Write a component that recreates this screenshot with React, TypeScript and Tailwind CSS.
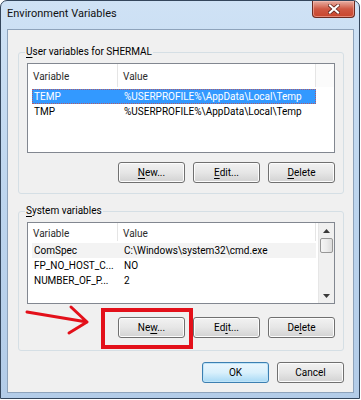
import React from 'react';

type Row = { name: string; value: string; selected?: boolean; hot?: boolean };

function M({ children }: { children: React.ReactNode }) {
  return <span className="underline underline-offset-[2px]">{children}</span>;
}

function Btn({ children, def = false }: { children: React.ReactNode; def?: boolean }) {
  return (
    <div
      className={
        'w-[67px] h-[21px] rounded-[3px] border flex items-center justify-center text-[10px] text-black ' +
        (def
          ? 'border-[#3c7fb1] bg-gradient-to-b from-[#eaf6fd] via-[#d9f0fc] to-[#a7d9f5] shadow-[inset_0_0_0_1px_#bfe4f8]'
          : 'border-[#707070] bg-gradient-to-b from-[#f2f2f2] via-[#e6e6e6] to-[#d2d2d2] shadow-[inset_0_0_0_1px_#fcfcfc]')
      }
    >
      <span className="leading-none">{children}</span>
    </div>
  );
}

function Header({ h, filler }: { h: string; filler: boolean }) {
  return (
    <div className={'flex shrink-0 bg-white text-[#2b2b2b] ' + h}>
      <div className="w-[90px] shrink-0 border-r border-[#e5e5e5] flex items-center pl-[5px] pt-[3px]">Variable</div>
      <div className="w-[198px] shrink-0 border-r border-[#e5e5e5] flex items-center pl-[5px] pt-[3px]">Value</div>
      {filler && <div className="flex-1 bg-[#fbfbfb]" />}
    </div>
  );
}

function RowView({ r }: { r: Row }) {
  return (
    <div
      className={
        'flex h-[15px] ml-[4px] w-[284px] items-center ' +
        (r.selected
          ? 'bg-[#3399ff] text-white outline outline-1 outline-dotted outline-[#b05a6a] -outline-offset-1'
          : r.hot
          ? 'bg-[#f3f3f3]'
          : '')
      }
    >
      <div className="w-[86px] shrink-0 pl-[2px] whitespace-nowrap">{r.name}</div>
      <div className="flex-1 pl-[6px] whitespace-nowrap">{r.value}</div>
    </div>
  );
}

function Scrollbar() {
  return (
    <div className="w-[16px] shrink-0 bg-[#f0f0f0] border-l border-[#e6e6e6] flex flex-col">
      <div className="h-[15px] flex items-center justify-center">
        <svg width="7" height="4" viewBox="0 0 7 4">
          <path d="M0 4 L3.5 0 L7 4 Z" fill="#3a3a3a" />
        </svg>
      </div>
      <div className="h-[15px] mx-[1px] rounded-[2px] border border-[#979797] bg-gradient-to-r from-[#f5f5f5] via-[#ececec] to-[#dcdcdc]" />
      <div className="flex-1" />
      <div className="h-[15px] flex items-center justify-center">
        <svg width="7" height="4" viewBox="0 0 7 4">
          <path d="M0 0 L3.5 4 L7 0 Z" fill="#3a3a3a" />
        </svg>
      </div>
    </div>
  );
}

function Group({
  title,
  rows,
  listH,
  headerH,
  rowsMt,
  scroll,
  btnMt,
  pb,
  mt,
  labels,
}: {
  title: React.ReactNode;
  rows: Row[];
  listH: string;
  headerH: string;
  rowsMt: string;
  scroll: boolean;
  btnMt: string;
  pb: string;
  mt: string;
  labels: React.ReactNode[];
}) {
  return (
    <fieldset className={'w-[326px] border border-[#d5dfe5] rounded-[3px] px-[8px] pt-[4px] ' + pb + ' ' + mt}>
      <legend className="-ml-[2px] px-[1px] leading-[14px] h-[14px]">{title}</legend>
      <div className={'border border-[#828790] bg-white flex ' + listH}>
        <div className="flex-1 flex flex-col overflow-hidden">
          <Header h={headerH} filler={!scroll} />
          <div className={'flex flex-col ' + rowsMt}>
            {rows.map((r, i) => (
              <RowView key={i} r={r} />
            ))}
          </div>
        </div>
        {scroll && <Scrollbar />}
      </div>
      <div className={'flex justify-end gap-[8px] ' + btnMt}>
        <Btn>{labels[0]}</Btn>
        <Btn>{labels[1]}</Btn>
        <Btn>{labels[2]}</Btn>
      </div>
    </fieldset>
  );
}

export default function App() {
  return (
    <div className="relative w-[361px] h-[400px] bg-white overflow-hidden font-['Roboto',sans-serif] text-[10px] leading-[14px] text-black">
      <div className="w-[360px] h-[399px] rounded-t-[7px] border border-[#34465c] bg-gradient-to-b from-[#cfe2f5] via-[#bdd5ee] to-[#b3cce8] flex flex-col pl-[6px] pr-[5px] pb-[5px]">
        <div className="h-[28px] shrink-0 flex items-start justify-between">
          <span className="mt-[6px] text-[11px] text-[#111]">Environment Variables</span>
          <div className="w-[43px] h-[17px] -mr-[1px] rounded-b-[4px] border border-t-0 border-[#6b2a20] bg-gradient-to-b from-[#e6aea3] via-[#cf5843] to-[#c8452c] flex items-center justify-center shadow-[inset_0_0_0_1px_rgba(255,200,190,0.5)]">
            <svg width="12" height="10" viewBox="0 0 12 10">
              <path d="M2 1.5 L10 8.5 M10 1.5 L2 8.5" stroke="#5a1e16" strokeWidth="3.6" strokeLinecap="square" />
              <path d="M2 1.5 L10 8.5 M10 1.5 L2 8.5" stroke="#ffffff" strokeWidth="2.2" strokeLinecap="square" />
            </svg>
          </div>
        </div>
        <div className="flex-1 bg-[#f0f0f0] border border-[#8ea3bb] flex flex-col pl-[10px] pr-[8px]">
          <Group
            title={
              <>
                <M>U</M>ser variables for SHERMAL
              </>
            }
            rows={[
              { name: 'TEMP', value: '%USERPROFILE%\\AppData\\Local\\Temp', selected: true },
              { name: 'TMP', value: '%USERPROFILE%\\AppData\\Local\\Temp' },
            ]}
            listH="h-[90px]"
            headerH="h-[23px]"
            rowsMt="mt-[2px]"
            scroll={false}
            btnMt="mt-[9px]"
            pb="pb-[10px]"
            mt="mt-[15px]"
            labels={[
              <>
                <M>N</M>ew...
              </>,
              <>
                <M>E</M>dit...
              </>,
              <>
                <M>D</M>elete
              </>,
            ]}
          />
          <Group
            title={
              <>
                <M>S</M>ystem variables
              </>
            }
            rows={[
              { name: 'ComSpec', value: 'C:\\Windows\\system32\\cmd.exe', hot: true },
              { name: 'FP_NO_HOST_C...', value: 'NO' },
              { name: 'NUMBER_OF_P...', value: '2' },
            ]}
            listH="h-[82px]"
            headerH="h-[18px]"
            rowsMt="mt-[2px]"
            scroll={true}
            btnMt="mt-[13px]"
            pb="pb-[12px]"
            mt="mt-[10px]"
            labels={[
              <>
                Ne<M>w</M>...
              </>,
              <>
                Ed<M>i</M>t...
              </>,
              <>
                De<M>l</M>ete
              </>,
            ]}
          />
          <div className="flex justify-end gap-[8px] mt-[11px] pr-[1px]">
            <Btn def>OK</Btn>
            <Btn>Cancel</Btn>
          </div>
        </div>
      </div>
      <svg className="absolute left-0 top-0 pointer-events-none" width="361" height="400" viewBox="0 0 361 400">
        <rect x="103" y="310" width="88" height="37" fill="none" stroke="#e3101a" strokeWidth="4" />
        <path d="M27 312 L87 322 M71 307 L87 322 L69 333" fill="none" stroke="#e3101a" strokeWidth="3" strokeLinecap="round" strokeLinejoin="round" />
      </svg>
    </div>
  );
}
